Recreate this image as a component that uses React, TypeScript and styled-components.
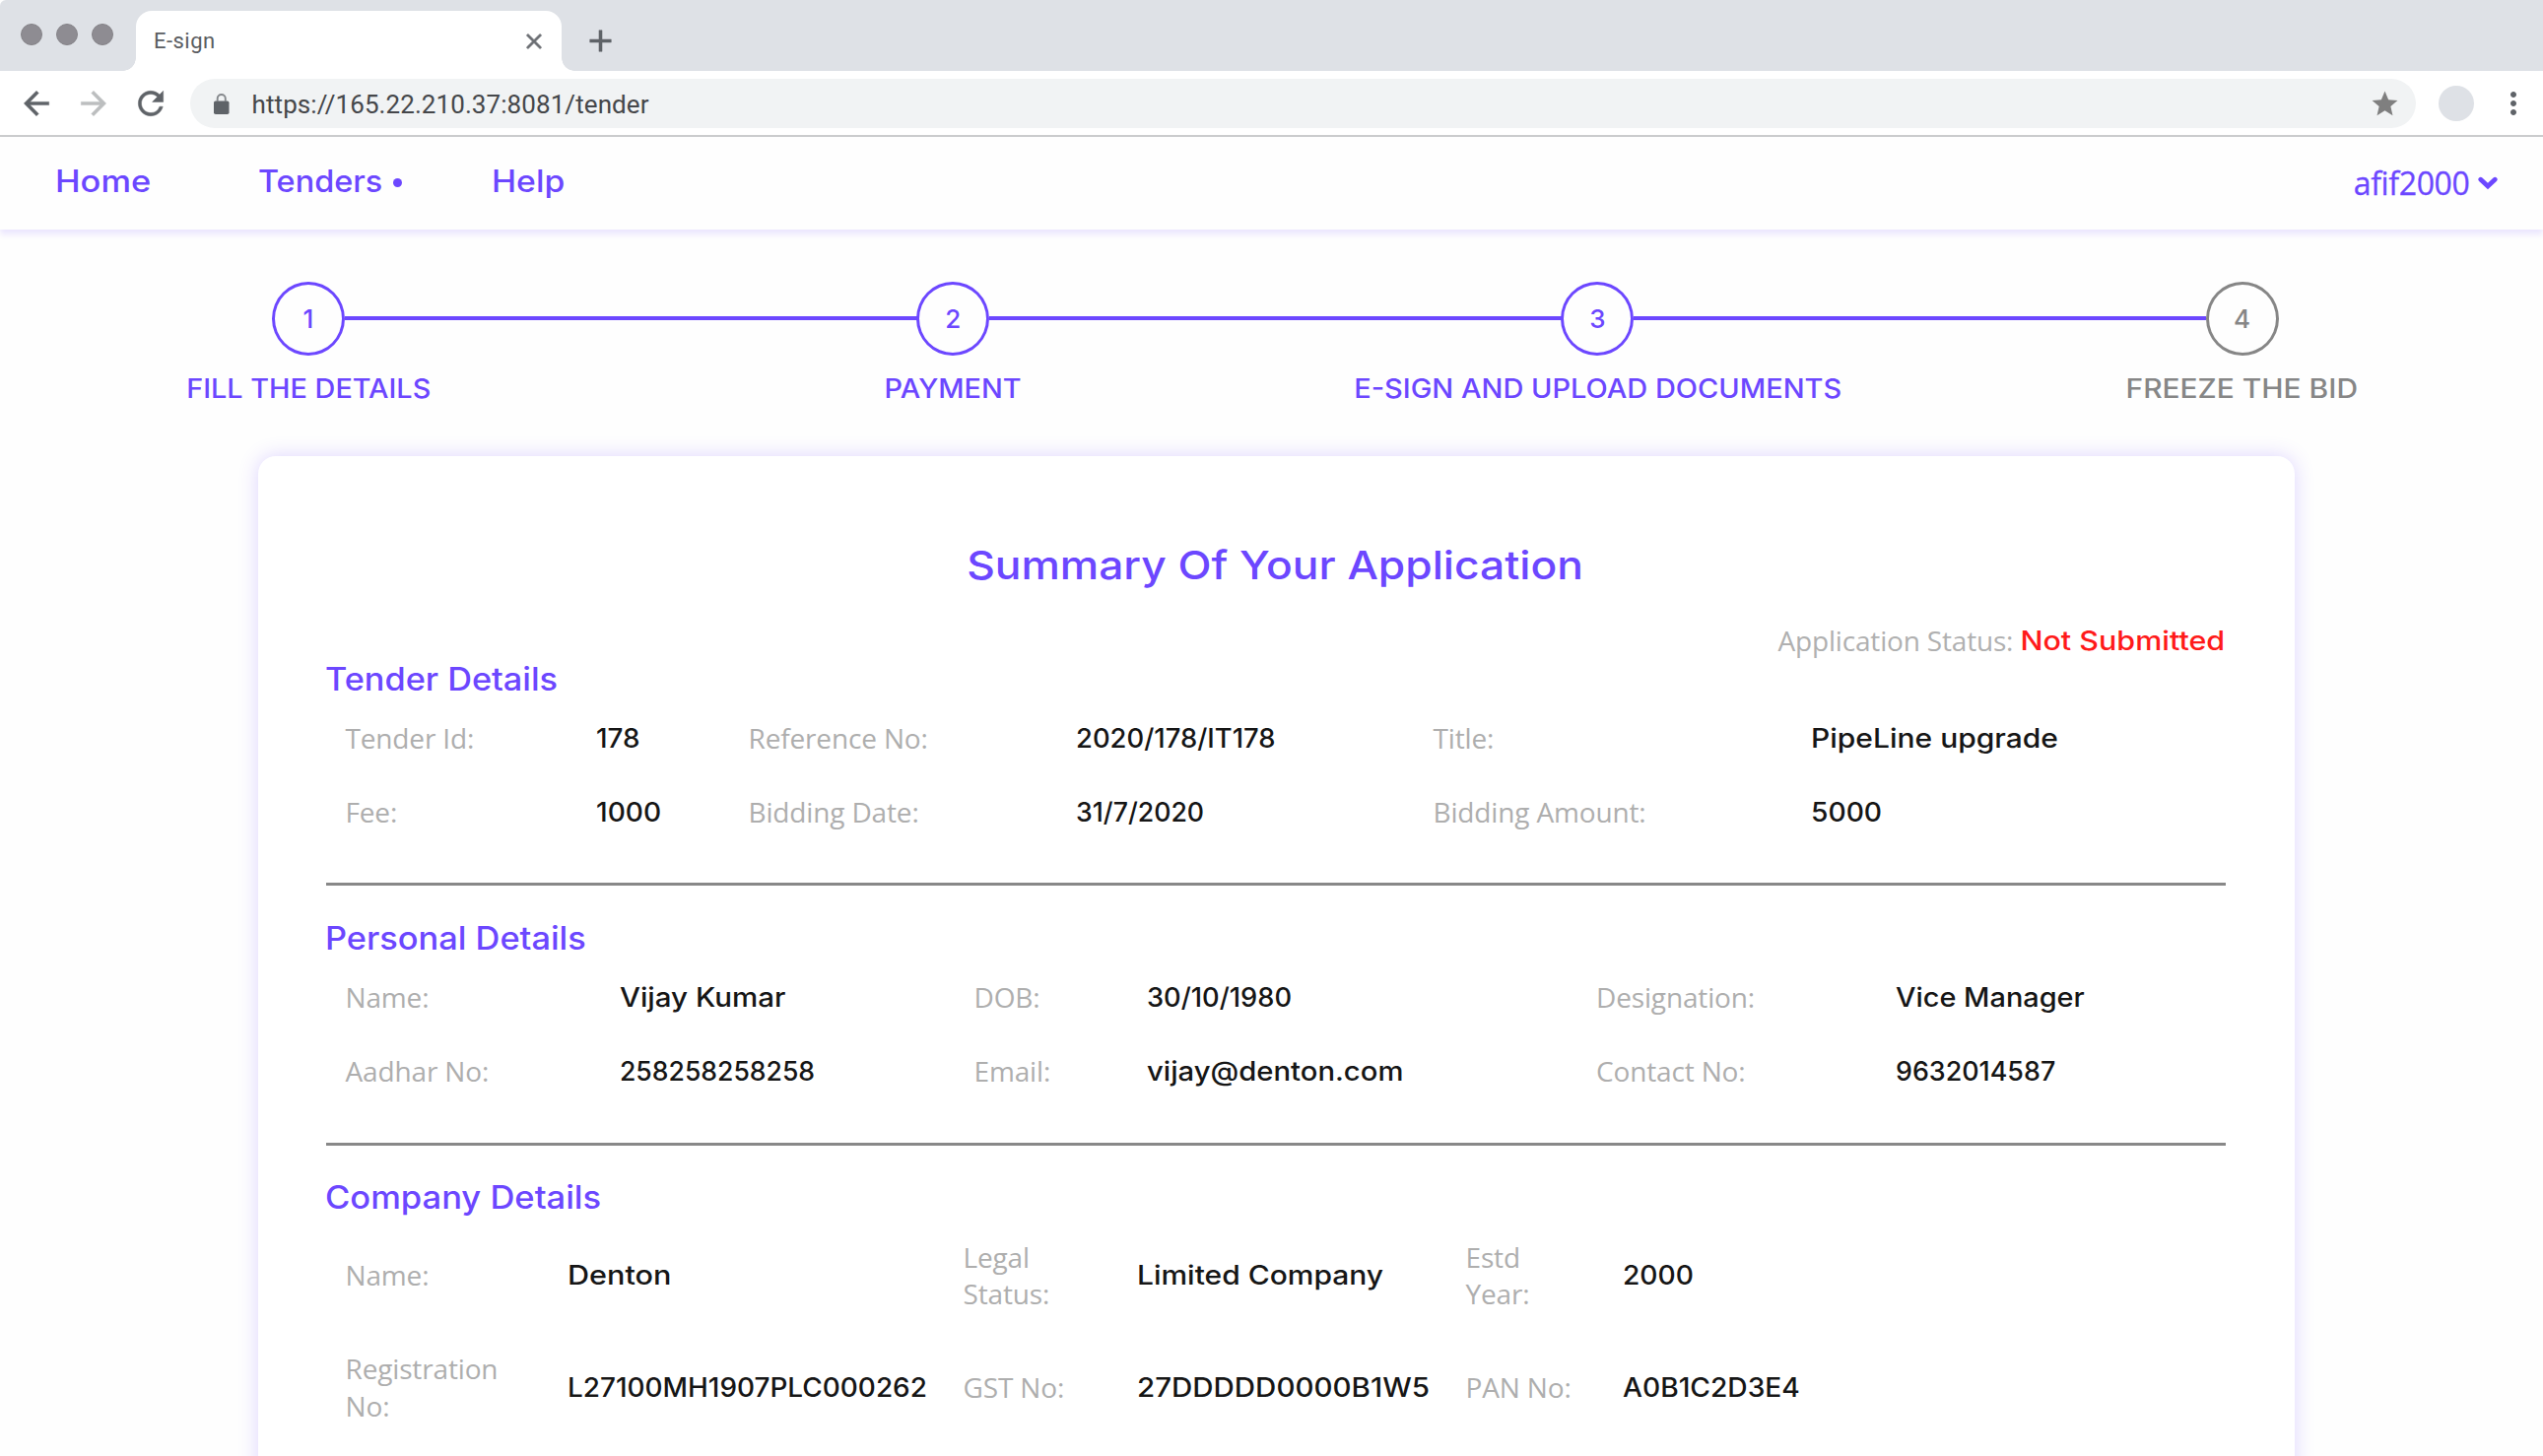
import React from "react";
import styled, { createGlobalStyle, css } from "styled-components";
import {
  MdAdd,
  MdArrowBack,
  MdArrowForward,
  MdClose,
  MdMoreVert,
  MdRefresh,
  MdStar,
} from "react-icons/md";

const VIOLET = "#6c47ff";
const DISPLAY = 'Inter, "Liberation Sans", sans-serif';
const BODY = '"Open Sans", "Noto Sans", sans-serif';
const CHROME = 'Roboto, "Liberation Sans", sans-serif';

const GlobalStyle = createGlobalStyle`
  *, *::before, *::after { box-sizing: border-box; }
  body { margin: 0; background: #fefefe; font-family: ${BODY}; }
`;

const stretched = css<{ $stretch: number }>`
  transform: scaleX(${(p) => p.$stretch});
  transform-origin: left center;
`;

const Window = styled.div`
  display: flex;
  flex-direction: column;
  height: 1478px;
  overflow: hidden;
`;

/* ---------- browser chrome ---------- */

const TabStrip = styled.div`
  display: flex;
  flex: none;
  height: 72px;
  padding-left: 21.4px;
  background: #dee1e6;
  border-top-left-radius: 6px;
`;

const WindowDots = styled.div`
  display: flex;
  gap: 14px;
  padding-top: 24px;
`;

const WindowDot = styled.span`
  width: 22px;
  height: 22px;
  border: 1px solid #858388;
  border-radius: 50%;
  background: #8e8c92;
`;

const Tab = styled.div`
  position: relative;
  display: flex;
  align-items: center;
  justify-content: space-between;
  width: 432px;
  margin: 11px 0 0 23px;
  padding: 0 15.5px 0 17.5px;
  border-radius: 16px 16px 0 0;
  background: #fff;
  color: #5a5d61;
  font: 400 22px/26px ${CHROME};
  letter-spacing: 0.5px;

  &::before,
  &::after {
    content: "";
    position: absolute;
    bottom: 0;
    width: 13px;
    height: 13px;
  }
  &::before {
    right: 100%;
    background: radial-gradient(circle at 0 0, transparent 12.5px, #fff 13px);
  }
  &::after {
    left: 100%;
    background: radial-gradient(circle at 100% 0, transparent 12.5px, #fff 13px);
  }
`;

const CloseTab = styled.span`
  display: flex;
  color: #6a6d72;

  path:last-child {
    stroke: currentColor;
    stroke-width: 0.7;
  }
`;

const NewTab = styled.div`
  display: flex;
  align-items: center;
  margin: 11px 0 0 21px;
  color: #5f6368;

  path:last-child {
    stroke: currentColor;
    stroke-width: 0.3;
  }
`;

const Toolbar = styled.div`
  display: flex;
  flex: none;
  align-items: center;
  height: 67px;
  padding: 1px 12px 0 18px;
  border-bottom: 2px solid #cbcccd;
  background: #fff;
  color: #5f6368;
`;

const HistoryButtons = styled.div`
  display: flex;
  gap: 19.8px;
  margin-right: 21px;
`;

const HistoryIcon = styled.span<{ $muted?: boolean }>`
  display: flex;
  color: ${(p) => (p.$muted ? "#bcbebf" : "#5f6368")};

  path:last-child {
    stroke: currentColor;
    stroke-width: 0.3;
  }
`;

const AddressBar = styled.div`
  display: flex;
  flex: 1;
  align-items: center;
  height: 50px;
  padding: 0 16px 0 24.5px;
  border-radius: 25px;
  background: #f1f3f4;
`;

const Address = styled.span`
  flex: 1;
  margin-left: 23px;
  padding-top: 2px;
  color: #45474a;
  font: 400 26px/32px ${CHROME};
  letter-spacing: 0.08px;
`;

const StarIcon = styled.span`
  display: flex;
  color: #7f7f7f;
`;

const Avatar = styled.span`
  width: 36px;
  height: 36px;
  margin: 0 22.5px;
  border-radius: 50%;
  background: #dee1e6;
`;

/* ---------- site navigation ---------- */

const NavBar = styled.nav`
  display: flex;
  flex: none;
  align-items: center;
  justify-content: space-between;
  height: 94px;
  padding: 0 46.5px 0 55.5px;
  box-shadow: 0 5px 6px rgba(106, 66, 255, 0.13);
  color: ${VIOLET};
`;

const NavLinks = styled.div`
  display: grid;
  grid-template-columns: 206px 237px auto;
  padding-bottom: 4px;
`;

const NavLink = styled.a`
  display: flex;
  align-items: center;
`;

const NavText = styled.span<{ $stretch: number }>`
  font: 500 31px/40px ${DISPLAY};
  ${stretched}
`;

const ActiveDot = styled.span`
  width: 9px;
  height: 9px;
  margin: 2px 0 0 17px;
  border-radius: 50%;
  background: currentColor;
`;

const UserMenu = styled.div`
  display: flex;
  align-items: center;
  gap: 8px;
  font: 400 32px/40px ${BODY};
  letter-spacing: -0.35px;
  -webkit-text-stroke: 0.3px currentColor;
`;

/* ---------- progress steps ---------- */

const Stepper = styled.div`
  display: flex;
  flex: none;
  align-items: flex-start;
  padding: 53px 268px 0 275.5px;
`;

const Step = styled.div<{ $pending?: boolean }>`
  display: flex;
  flex: none;
  flex-direction: column;
  align-items: center;
  gap: 18px;
  width: 75px;
  color: ${(p) => (p.$pending ? "#868686" : VIOLET)};
`;

const StepNumber = styled.span`
  display: flex;
  align-items: center;
  justify-content: center;
  width: 74px;
  height: 75px;
  border: 3px solid currentColor;
  border-radius: 50%;
  font: 500 26px/30px ${DISPLAY};
`;

const StepLabel = styled.span<{ $stretch: number }>`
  font: 500 27px/32px ${DISPLAY};
  white-space: nowrap;
  ${stretched}
  transform-origin: center;
`;

const Connector = styled.span`
  flex: 1;
  height: 4px;
  margin: 35px -1px 0;
  background: ${VIOLET};
`;

/* ---------- summary card ---------- */

const Card = styled.main`
  flex: none;
  width: 2067px;
  height: 1200px;
  margin: 52px 0 0 261.5px;
  padding: 86px 69.5px 0;
  border-radius: 18px;
  background: #fff;
  box-shadow: 0 0 20px rgba(106, 66, 255, 0.22);
`;

const Title = styled.h1<{ $stretch: number }>`
  margin: 0 1.5px 0 -1.5px;
  color: ${VIOLET};
  font: 500 40px/49px ${DISPLAY};
  text-align: center;
  ${stretched}
  transform-origin: center;
`;

const Status = styled.div`
  display: flex;
  align-items: center;
  justify-content: flex-end;
  gap: 31px;
  height: 38.7px;
  margin: 33px 0.5px 0 0;
  color: #b0b0b0;
  font: 400 28px/38px ${BODY};
  letter-spacing: -0.18px;
`;

const StatusValue = styled.strong<{ $stretch: number }>`
  padding-top: 1px;
  color: #ff1a1a;
  font: 500 27px/38px ${DISPLAY};
  letter-spacing: 0;
  ${stretched}
  transform-origin: right center;
`;

const Section = styled.section`
  & + & {
    margin-top: 34.2px;
    padding-top: 33.6px;
    border-top: 3px solid #888;
  }
`;

const SectionTitle = styled.h2<{ $stretch: number }>`
  margin: 0 0 1.5px -1px;
  color: ${VIOLET};
  font: 500 32px/40px ${DISPLAY};
  ${stretched}
`;

const Fields = styled.dl<{ $columns: string; $rowHeight: number }>`
  display: grid;
  grid-template-columns: ${(p) => p.$columns};
  grid-auto-rows: ${(p) => p.$rowHeight}px;
  align-items: center;
  margin: 0;
  padding-left: 19.5px;
`;

const FieldName = styled.dt`
  padding: 1px 40px 0 0;
  color: #aeaeae;
  font: 400 28px/37.5px ${BODY};
  letter-spacing: -0.15px;
`;

const FieldValue = styled.dd<{ $stretch: number }>`
  margin: 0;
  padding-top: 1px;
  color: #161616;
  font: 500 27px/37.5px ${DISPLAY};
  white-space: nowrap;
  ${stretched}
`;

type Field = [name: string, value: string, stretch: number];

interface SectionData {
  title: string;
  stretch: number;
  columns: string;
  rowHeight: number;
  fields: Field[];
}

const steps = [
  { label: "FILL THE DETAILS", stretch: 1.067 },
  { label: "PAYMENT", stretch: 1.068 },
  { label: "E-SIGN AND UPLOAD DOCUMENTS", stretch: 1.073 },
  { label: "FREEZE THE BID", stretch: 1.108 },
];

const sections: SectionData[] = [
  {
    title: "Tender Details",
    stretch: 1.071,
    columns: "254px 155px 332px 363px 383.5px auto",
    rowHeight: 75.5,
    fields: [
      ["Tender Id:", "178", 1.03],
      ["Reference No:", "2020/178/IT178", 1.015],
      ["Title:", "PipeLine upgrade", 1.111],
      ["Fee:", "1000", 1.04],
      ["Bidding Date:", "31/7/2020", 0.988],
      ["Bidding Amount:", "5000", 1.045],
    ],
  },
  {
    title: "Personal Details",
    stretch: 1.074,
    columns: "278.5px 359.5px 175.5px 456px 304px auto",
    rowHeight: 75.5,
    fields: [
      ["Name:", "Vijay Kumar", 1.093],
      ["DOB:", "30/10/1980", 1.01],
      ["Designation:", "Vice Manager", 1.07],
      ["Aadhar No:", "258258258258", 0.984],
      ["Email:", "vijay@denton.com", 1.083],
      ["Contact No:", "9632014587", 0.995],
    ],
  },
  {
    title: "Company Details",
    stretch: 1.079,
    columns: "225px 402px 176px 334px 159px auto",
    rowHeight: 113.5,
    fields: [
      ["Name:", "Denton", 1.133],
      ["Legal Status:", "Limited Company", 1.11],
      ["Estd Year:", "2000", 1.043],
      ["Registration No:", "L27100MH1907PLC000262", 1.034],
      ["GST No:", "27DDDDD0000B1W5", 1.092],
      ["PAN No:", "A0B1C2D3E4", 1.043],
    ],
  },
];

const LockIcon = () => (
  <svg width="15.5" height="21" viewBox="0 0 15.5 21">
    <rect x="0" y="7.5" width="15.5" height="13.5" rx="1.8" fill="#5f6368" />
    <path
      d="M3.7 8V5.1a4.05 4.05 0 0 1 8.1 0V8"
      fill="none"
      stroke="#85888c"
      strokeWidth="1.9"
    />
  </svg>
);

const ChevronIcon = () => (
  <svg width="20" height="14" viewBox="0 0 20 14">
    <path
      d="M2.8 3.2 10 9.9l7.2-6.7"
      fill="none"
      stroke="currentColor"
      strokeWidth="4.8"
      strokeLinecap="round"
      strokeLinejoin="miter"
    />
  </svg>
);

export default function App() {
  return (
    <Window>
      <GlobalStyle />

      <TabStrip>
        <WindowDots>
          <WindowDot />
          <WindowDot />
          <WindowDot />
        </WindowDots>
        <Tab>
          E-sign
          <CloseTab>
            <MdClose size={26} />
          </CloseTab>
        </Tab>
        <NewTab>
          <MdAdd size={37} />
        </NewTab>
      </TabStrip>

      <Toolbar>
        <HistoryButtons>
          <HistoryIcon>
            <MdArrowBack size={38} />
          </HistoryIcon>
          <HistoryIcon $muted>
            <MdArrowForward size={38} />
          </HistoryIcon>
          <HistoryIcon>
            <MdRefresh size={38} />
          </HistoryIcon>
        </HistoryButtons>
        <AddressBar>
          <LockIcon />
          <Address>https://165.22.210.37:8081/tender</Address>
          <StarIcon>
            <MdStar size={31} />
          </StarIcon>
        </AddressBar>
        <Avatar />
        <MdMoreVert size={36} />
      </Toolbar>

      <NavBar>
        <NavLinks>
          <NavLink>
            <NavText $stretch={1.11}>Home</NavText>
          </NavLink>
          <NavLink>
            <NavText $stretch={1.045}>Tenders</NavText>
            <ActiveDot />
          </NavLink>
          <NavLink>
            <NavText $stretch={1.087}>Help</NavText>
          </NavLink>
        </NavLinks>
        <UserMenu>
          afif2000
          <ChevronIcon />
        </UserMenu>
      </NavBar>

      <Stepper>
        {steps.map((step, i) => (
          <React.Fragment key={step.label}>
            {i > 0 && <Connector />}
            <Step $pending={i === steps.length - 1}>
              <StepNumber>{i + 1}</StepNumber>
              <StepLabel $stretch={step.stretch}>{step.label}</StepLabel>
            </Step>
          </React.Fragment>
        ))}
      </Stepper>

      <Card>
        <Title $stretch={1.108}>Summary Of Your Application</Title>
        <Status>
          Application Status:
          <StatusValue $stretch={1.128}>Not Submitted</StatusValue>
        </Status>
        {sections.map((section) => (
          <Section key={section.title}>
            <SectionTitle $stretch={section.stretch}>{section.title}</SectionTitle>
            <Fields $columns={section.columns} $rowHeight={section.rowHeight}>
              {section.fields.map(([name, value, stretch]) => (
                <React.Fragment key={name}>
                  <FieldName>{name}</FieldName>
                  <FieldValue $stretch={stretch}>{value}</FieldValue>
                </React.Fragment>
              ))}
            </Fields>
          </Section>
        ))}
      </Card>
    </Window>
  );
}
